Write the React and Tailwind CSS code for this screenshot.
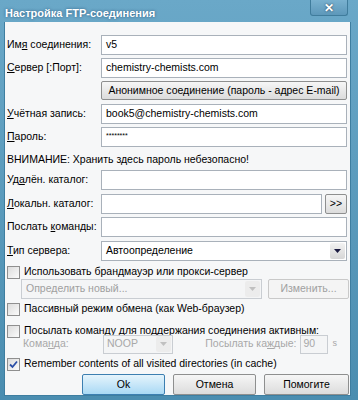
import React from "react";

const font = { fontFamily: '"Liberation Sans", Arial, sans-serif' };

function U({ children }) {
  return <span className="underline underline-offset-[1px]">{children}</span>;
}

function Input({ children, className = "" }) {
  return (
    <div className={"h-[20px] border border-[#a9b1ba] bg-white flex items-center px-[4px] text-[10.5px] text-black whitespace-nowrap " + className}>
      {children}
    </div>
  );
}

function Row({ label, children, mt = "mt-[3px]" }) {
  return (
    <div className={"flex items-center " + mt}>
      <div className="w-[94px] shrink-0 text-[10.5px] text-black whitespace-nowrap">{label}</div>
      <div className="flex-1 flex">{children}</div>
    </div>
  );
}

function Btn({ children, className = "", primary = false, disabled = false }) {
  return (
    <div
      className={
        "h-[20px] flex items-center justify-center text-[10.5px] rounded-[2px] border whitespace-nowrap " +
        (primary
          ? "border-[#3c7fb1] bg-gradient-to-b from-[#e5f4fc] to-[#a9d9f4] text-black "
          : disabled
          ? "border-[#c9c9c9] bg-[#f4f4f4] text-[#a0a0a0] "
          : "border-[#8e8f8f] bg-gradient-to-b from-[#f6f6f6] to-[#dcdcdc] text-black ") +
        className
      }
    >
      {children}
    </div>
  );
}

function Check({ checked = false }) {
  return (
    <div className="w-[13px] h-[13px] border border-[#8f8f8f] bg-gradient-to-br from-[#dcdcdc] to-[#fbfbfb] flex items-center justify-center shrink-0">
      {checked && (
        <svg width="9" height="9" viewBox="0 0 9 9">
          <path d="M1 4.5 L3.5 7 L8 1.5" stroke="#2a4ea6" strokeWidth="1.8" fill="none" />
        </svg>
      )}
    </div>
  );
}

function Arrow({ disabled = false }) {
  return (
    <div className={"w-[15px] h-[16px] mr-[1px] flex items-center justify-center rounded-[2px] " + (disabled ? "bg-[#ececec]" : "bg-gradient-to-b from-[#f2f2f2] to-[#d6d6d6]")}>
      <svg width="7" height="4" viewBox="0 0 7 4">
        <path d="M0 0 L7 0 L3.5 4 Z" fill={disabled ? "#c0c0c0" : "#1a1a40"} />
      </svg>
    </div>
  );
}

function CheckRow({ checked, children, mt }) {
  return (
    <div className={"flex items-center gap-[4px] h-[14px] " + mt}>
      <Check checked={checked} />
      <span className="text-[10.5px] whitespace-nowrap">{children}</span>
    </div>
  );
}

export default function App() {
  return (
    <div style={font} className="w-[358px] h-[400px] bg-gradient-to-b from-[#6aa8c8] to-[#4a8db0] flex flex-col overflow-hidden">
      {/* Title bar */}
      <div className="h-[22px] shrink-0 flex items-start relative">
        <div className="pl-[5px] pt-[5px] text-[11px] font-bold text-white whitespace-nowrap [text-shadow:0_0_3px_rgba(0,40,80,0.6)]">
          Настройка FTP-соединения
        </div>
        <div className="absolute left-[310px] top-0 w-[38px] h-[16px] border border-[#3f7c9c] border-t-0 rounded-b-[3px] bg-gradient-to-b from-[#79b1cf] to-[#5d98ba] flex items-center justify-center">
          <span className="text-white font-bold text-[12px] leading-none [text-shadow:0_0_2px_#234]">✕</span>
        </div>
      </div>
      {/* Content */}
      <div className="ml-[4px] mr-[7px] mb-[4px] flex-1 bg-[#f6f7f8] pl-[2px] pr-[3px] pt-[13px] border border-[#3e7ea0] border-t-0">
        <Row label={<span>Им<U>я</U> соединения:</span>} mt="mt-0">
          <Input className="flex-1">v5</Input>
        </Row>
        <Row label={<span><U>С</U>ервер [:Порт]:</span>}>
          <Input className="flex-1">chemistry-chemists.com</Input>
        </Row>
        <Row label="">
          <Btn className="flex-1 !h-[19px]">Анонимное соединение (пароль - адрес E-mail)</Btn>
        </Row>
        <Row label={<span><U>У</U>чётная запись:</span>} mt="mt-[4px]">
          <Input className="flex-1">book5@chemistry-chemists.com</Input>
        </Row>
        <Row label={<span><U>П</U>ароль:</span>}>
          <Input className="flex-1 !text-[7px] text-[#555] !items-start pt-[3px]">********</Input>
        </Row>
        <div className="mt-[5px] h-[15px] text-[10.5px] text-black flex items-center whitespace-nowrap">ВНИМАНИЕ: Хранить здесь пароль небезопасно!</div>
        <Row label={<span>Уд<U>а</U>лён. каталог:</span>} mt="mt-[3px]">
          <Input className="flex-1" />
        </Row>
        <Row label={<span><U>Л</U>окальн. каталог:</span>} mt="mt-[4px]">
          <Input className="flex-1" />
          <Btn className="w-[22px] ml-[3px] !h-[20px]">&gt;&gt;</Btn>
        </Row>
        <Row label={<span>Послать <U>к</U>оманды:</span>} mt="mt-[3px]">
          <Input className="flex-1" />
        </Row>
        <Row label={<span><U>Т</U>ип сервера:</span>} mt="mt-[4px]">
          <div className="flex-1 h-[20px] border border-[#a9b1ba] bg-white flex items-center justify-between pl-[4px] text-[10.5px]">
            <span>Автоопределение</span>
            <Arrow />
          </div>
        </Row>
        <CheckRow mt="mt-[4px]">Использовать брандмауэр или прокси-сервер</CheckRow>
        <div className="flex items-center mt-0 ml-[14px]">
          <div className="w-[241px] h-[20px] border border-[#c9cdd2] bg-[#f4f5f6] flex items-center justify-between pl-[4px] text-[10.5px] text-[#a0a0a0]">
            <span>Определить новый...</span>
            <Arrow disabled />
          </div>
          <Btn disabled className="ml-[6px] flex-1 mr-[-2px]">Изменить...</Btn>
        </div>
        <CheckRow mt="mt-[3px]">Пассивный режим обмена (как Web-браузер)</CheckRow>
        <CheckRow mt="mt-[8px]">Посылать команду для поддержания соединения активным:</CheckRow>
        <div className="flex items-center mt-[-4px] h-[20px] text-[10.5px] text-[#a8a8a8] whitespace-nowrap">
          <span className="ml-[16px] w-[80px]">Кома<U>н</U>да:</span>
          <div className="w-[70px] h-[19px] border border-[#c9cdd2] bg-[#f4f5f6] flex items-center justify-between pl-[3px]">
            <span>NOOP</span>
            <Arrow disabled />
          </div>
          <span className="ml-auto">Посылать ка<U>ж</U>дые:</span>
          <div className="ml-[3px] w-[28px] h-[19px] border border-[#c9cdd2] bg-[#f4f5f6] flex items-center pl-[3px]">90</div>
          <span className="ml-[5px] mr-[10px] text-[9px]">s</span>
        </div>
        <CheckRow checked mt="mt-[3px]">Remember contents of all visited directories (in cache)</CheckRow>
        <div className="flex justify-end gap-[8px] mt-[3px] mr-[-2px]">
          <Btn primary className="w-[83px] !h-[21px]">Ok</Btn>
          <Btn className="w-[83px] !h-[21px]">Отмена</Btn>
          <Btn className="w-[85px] !h-[21px]">Помогите</Btn>
        </div>
      </div>
    </div>
  );
}
